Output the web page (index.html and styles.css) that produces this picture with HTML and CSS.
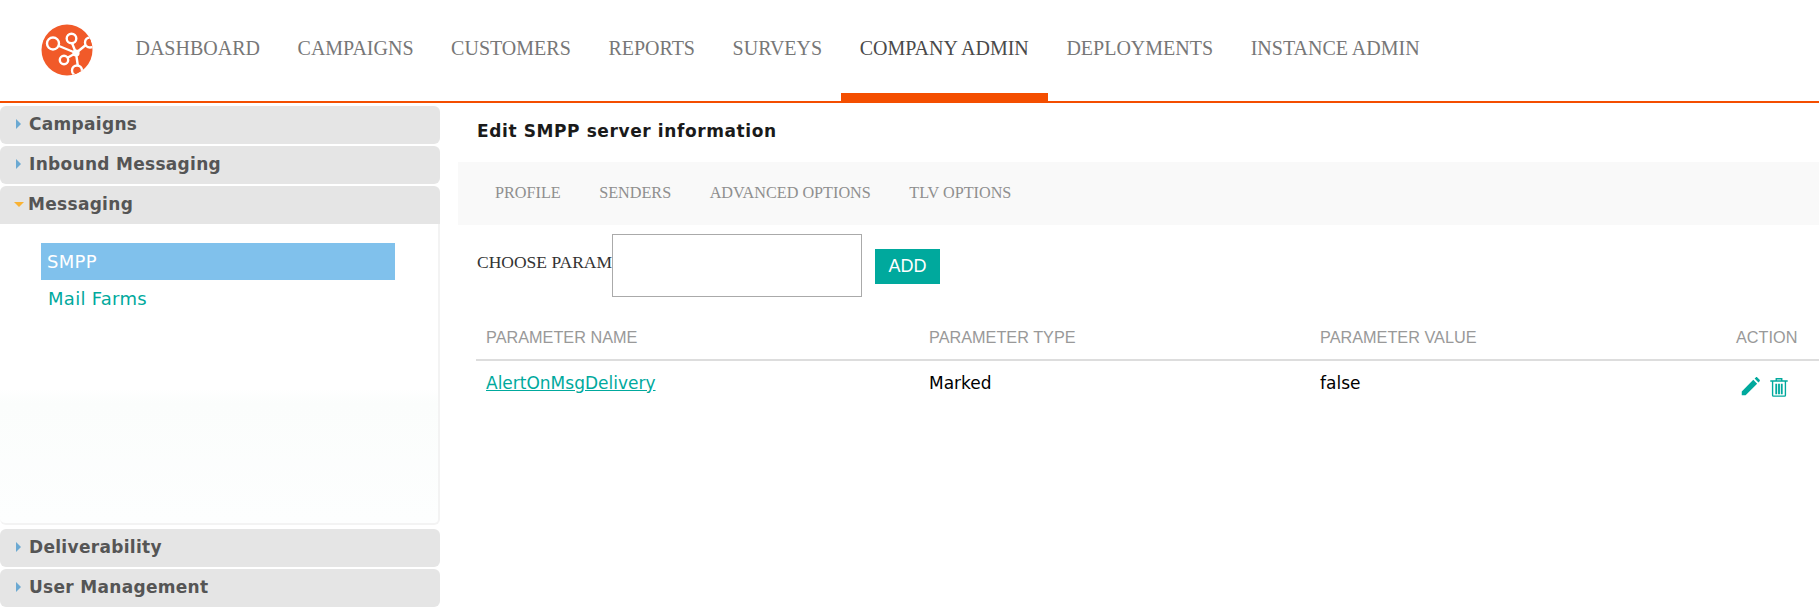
FILE: index.html
```html
<!DOCTYPE html>
<html lang="en">
<head>
<meta charset="utf-8">
<title>Edit SMPP server information</title>
<link rel="stylesheet" href="styles.css">
</head>
<body>
<header class="topbar">
  <svg class="logo" viewBox="0 0 52 52" width="52" height="52" aria-label="logo">
    <defs><clipPath id="lc"><ellipse cx="26" cy="26" rx="25.5" ry="25.5"/></clipPath></defs>
    <ellipse cx="26" cy="26" rx="25.5" ry="25.5" fill="#f15a29"/>
    <g clip-path="url(#lc)" fill="none" stroke="#fff" stroke-width="2.4">
      <path d="M18 22 L35 29 M31 19 L35 29 M26 34 L35 29 M35 29 L46 20 M35 29 L37 43"/>
      <circle cx="12" cy="19.5" r="6" fill="#f15a29"/>
      <circle cx="30.5" cy="14.5" r="4.8" fill="#f15a29"/>
      <circle cx="23" cy="36" r="4.2" fill="#f15a29"/>
      <circle cx="49" cy="18.5" r="5" fill="#f15a29"/>
      <circle cx="36" cy="46.5" r="5" fill="#f15a29"/>
      <circle cx="35" cy="29" r="3.6" fill="#fff" stroke="none"/>
    </g>
  </svg>
  <nav class="mainnav">
    <a class="navlink">DASHBOARD</a>
    <a class="navlink">CAMPAIGNS</a>
    <a class="navlink">CUSTOMERS</a>
    <a class="navlink">REPORTS</a>
    <a class="navlink">SURVEYS</a>
    <a class="navlink active">COMPANY ADMIN</a>
    <a class="navlink">DEPLOYMENTS</a>
    <a class="navlink">INSTANCE ADMIN</a>
  </nav>
</header>
<div class="layout">
  <aside class="sidebar">
    <div class="acc-head"><span class="tri"></span>Campaigns</div>
    <div class="acc-head"><span class="tri"></span>Inbound Messaging</div>
    <div class="acc-head open"><span class="tri-down"></span>Messaging</div>
    <div class="acc-panel">
      <a class="side-item selected">SMPP</a>
      <a class="side-item">Mail Farms</a>
    </div>
    <div class="acc-head"><span class="tri"></span>Deliverability</div>
    <div class="acc-head"><span class="tri"></span>User Management</div>
  </aside>
  <main class="content">
    <h1 class="title">Edit SMPP server information</h1>
    <div class="tabs">
      <a class="tab">PROFILE</a>
      <a class="tab">SENDERS</a>
      <a class="tab">ADVANCED OPTIONS</a>
      <a class="tab">TLV OPTIONS</a>
    </div>
    <div class="param-form">
      <label class="param-label">CHOOSE PARAM</label>
      <div class="param-select"></div>
      <button class="add-btn">ADD</button>
    </div>
    <table class="param-table">
      <thead>
        <tr>
          <th class="c1">PARAMETER NAME</th>
          <th class="c2">PARAMETER TYPE</th>
          <th class="c3">PARAMETER VALUE</th>
          <th class="c4">ACTION</th>
        </tr>
      </thead>
      <tbody>
        <tr>
          <td><a class="param-link">AlertOnMsgDelivery</a></td>
          <td>Marked</td>
          <td>false</td>
          <td class="actions">
            <svg class="icon pencil" viewBox="0 0 24 24" width="22" height="22"><path d="M3 21v-4.200L15.600 4.200l4.200 4.200L7.200 21H3zM17 2.800l1.300-1.300c.5-.5 1.200-.5 1.700 0l2.500 2.500c.5.5.5 1.200 0 1.700L21.200 7 17 2.800z" fill="#00a99d"/></svg>
            <svg class="icon trash" viewBox="0 0 24 24" width="22" height="22" fill="none" stroke="#00a99d" stroke-width="1.500"><path d="M2.500 5.500h19M9 5.500V3h6v2.500M5 5.500h14v15.500a1 1 0 0 1-1 1H6a1 1 0 0 1-1-1z"/><path d="M9 8.500V20M12 8.500V20M15 8.500V20" stroke-width="2"/></svg>
          </td>
        </tr>
      </tbody>
    </table>
  </main>
</div>
</body>
</html>
```
FILE: styles.css
```css
* { box-sizing: border-box; }
html, body { margin: 0; padding: 0; background: #fff; }
body { width: 1819px; height: 608px; overflow: hidden; font-family: "Liberation Serif", serif; }

.topbar {
  display: flex;
  height: 103px;
  border-bottom: 2px solid #f44e00;
  padding-left: 41px;
}
.logo { margin-top: 24px; flex: none; }
.mainnav { display: flex; margin-left: 23.700px; }
.navlink {
  display: block;
  height: 101px;
  padding: 37px 18.800px 0;
  font-size: 20px;
  line-height: 23px;
  color: #777;
  white-space: nowrap;
}
.navlink.active { color: #4a4a4a; border-bottom: 8px solid #f44e00; }

.layout { display: flex; align-items: flex-start; }
.sidebar { width: 440px; flex: none; padding-top: 3px; }
.acc-head {
  display: flex;
  align-items: center;
  height: 38px;
  margin-bottom: 2px;
  padding: 0 0 2px 16px;
  background: #e5e5e5;
  border-radius: 6px;
  font-family: "DejaVu Sans", sans-serif;
  font-weight: bold;
  font-size: 17px;
  letter-spacing: 0.300px;
  color: #555;
}
.acc-head.open { border-radius: 6px 6px 0 0; margin-bottom: 0; }
.tri {
  width: 0; height: 0;
  margin-right: 8px;
  border-left: 5px solid #6ba9d2;
  border-top: 5px solid transparent;
  border-bottom: 5px solid transparent;
}
.tri-down {
  width: 0; height: 0;
  margin: 0 4px 0 -2px;
  border-top: 5px solid #f9b233;
  border-left: 5px solid transparent;
  border-right: 5px solid transparent;
}
.acc-panel {
  height: 301px;
  margin-bottom: 4px;
  padding: 19px 0 0 41px;
  border-right: 2px solid #f3f3f3;
  border-bottom: 2px solid #f3f3f3;
  border-radius: 0 0 6px 6px;
  background: linear-gradient(#fff 0, #fff 55%, #fbfdfc 60%, #fdfefe 100%);
}
.side-item {
  display: block;
  width: 354px;
  font-family: "DejaVu Sans", sans-serif;
  font-size: 18px;
  letter-spacing: 0.300px;
  line-height: 37px;
  padding-left: 7px;
  color: #00a99d;
}
.side-item.selected { background: #80c1ec; color: #fff; padding-left: 6px; }

.content { flex: 1; min-width: 0; padding: 0 0 0 18px; }
.title {
  margin: 0;
  padding: 16px 0 0 19px;
  height: 59px;
  font-family: "DejaVu Sans", sans-serif;
  font-weight: bold;
  font-size: 17px;
  line-height: 24px;
  letter-spacing: 0.600px;
  color: #1a1a1a;
}
.tabs {
  display: flex;
  gap: 38.500px;
  align-items: center;
  height: 63px;
  padding-left: 37px;
  background: #f9f9f9;
}
.tab { font-size: 16.200px; color: #8f8f8f; white-space: nowrap; }

.param-form {
  display: flex;
  align-items: flex-start;
  padding: 9px 0 0 19px;
  height: 90px;
}
.param-label { font-size: 17.500px; line-height: 20px; margin-top: 18px; color: #333; white-space: nowrap; }
.param-select { width: 250px; height: 63px; border: 1px solid #aaa; background: #fff; }
.add-btn {
  margin: 15px 0 0 13px;
  width: 65px;
  height: 35px;
  padding: 0;
  border: 0;
  background: #00a99d;
  color: #fff;
  font-family: "Liberation Sans", sans-serif;
  font-size: 18px;
}

.param-table {
  margin-left: 18px;
  width: 1343px;
  border-collapse: collapse;
  table-layout: fixed;
}
.param-table th {
  height: 45px;
  padding: 1px 0 0 10px;
  border-bottom: 2px solid #ddd;
  font-family: "Liberation Sans", sans-serif;
  font-weight: normal;
  font-size: 16.250px;
  text-align: left;
  color: #999;
}
.c1 { width: 443px; }
.c2 { width: 391px; }
.c3 { width: 416px; }
.param-table td {
  height: 44px;
  padding: 0 0 0 10px;
  font-family: "DejaVu Sans", sans-serif;
  font-size: 17px;
  color: #000;
  vertical-align: middle;
}
.param-link { color: #00a99d; text-decoration: underline; }
.param-table td.actions { padding: 8px 0 0 13px; white-space: nowrap; }
.icon { vertical-align: middle; }
.pencil { margin-right: 2px; }
```
